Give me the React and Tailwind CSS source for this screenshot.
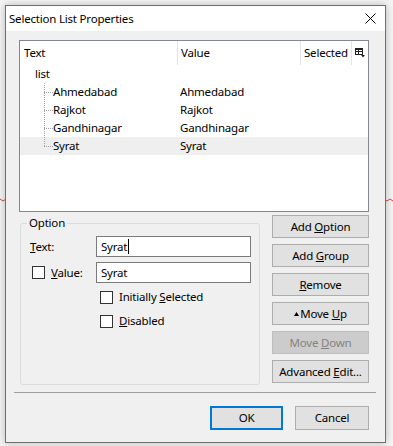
import React from "react";

const font = { fontFamily: '"Noto Sans", "Liberation Sans", sans-serif' };

function Btn({ children, disabled, className = "" }) {
  return (
    <div
      className={
        "flex h-[23px] w-[97px] items-center justify-center border text-[11.5px] " +
        (disabled
          ? "border-[#bfbfbf] bg-[#cccccc] text-[#838383] "
          : "border-[#adadad] bg-[#e1e1e1] text-black ") +
        className
      }
    >
      {children}
    </div>
  );
}

function Check() {
  return <div className="h-[13px] w-[13px] shrink-0 border border-[#333333] bg-white" />;
}

function TreeRow({ text, last, selected }) {
  return (
    <div className={"flex h-[18px] items-center " + (selected ? "bg-[#efefef]" : "")}>
      <div className="flex w-[158px] items-center pl-[24px]">
        <svg width="9" height="18" className="shrink-0">
          <line x1="0.5" y1="0" x2="0.5" y2={last ? 9 : 18} stroke="#a0a0a0" strokeDasharray="1 1" />
          <line x1="0" y1="9.5" x2="9" y2="9.5" stroke="#a0a0a0" strokeDasharray="1 1" />
        </svg>
        <span className="text-[11.5px] text-black">{text}</span>
      </div>
      <span className="pl-[2px] text-[11.5px] text-black">{text}</span>
    </div>
  );
}

export default function App() {
  return (
    <div
      className="relative h-[446px] w-[393px] overflow-hidden bg-[#f5f5f5] tracking-[-0.2px]"
      style={font}
    >
      <svg className="absolute left-0 top-[198px]" width="393" height="4">
        <polyline
          points={Array.from({ length: 132 }, (_, i) => `${i * 3},${i % 2 ? 3 : 1}`).join(" ")}
          fill="none"
          stroke="#e04040"
          strokeWidth="1"
        />
      </svg>
      <div className="relative ml-[5px] mt-[5px] flex h-[438px] w-[381px] flex-col border border-[#6f6f6f] bg-[#f0f0f0] shadow-[0_0_8px_rgba(0,0,0,0.25)]">
        {/* Title bar */}
        <div className="flex h-[25px] items-center justify-between bg-white pl-[3px] pr-[9px]">
          <span className="text-[11.5px] text-black">Selection List Properties</span>
          <svg width="11" height="11" viewBox="0 0 11 11">
            <path d="M0.5 0.5 L10.5 10.5 M10.5 0.5 L0.5 10.5" stroke="#000" strokeWidth="1" />
          </svg>
        </div>

        {/* List */}
        <div className="ml-[13px] mt-[9px] h-[172px] w-[350px] border border-[#828790] bg-white">
          <div className="flex h-[24px] text-[11.5px] text-black">
            <div className="flex w-[158px] items-center border-r border-[#e5e5e5] pl-[4px]">Text</div>
            <div className="flex w-[123px] items-center border-r border-[#e5e5e5] pl-[3px]">Value</div>
            <div className="flex w-[51px] items-center overflow-hidden whitespace-nowrap border-r border-[#e5e5e5] pl-[3px]">
              Selected
            </div>
            <div className="flex flex-1 items-center pl-[3px]">
              <svg width="11" height="10" viewBox="0 0 11 10">
                <rect x="0.5" y="0.5" width="7" height="6" fill="none" stroke="#222" />
                <line x1="0" y1="1.5" x2="8" y2="1.5" stroke="#222" />
                <line x1="0" y1="3.5" x2="8" y2="3.5" stroke="#222" />
                <line x1="3.5" y1="0" x2="3.5" y2="7" stroke="#222" />
                <path d="M6 7 L10 7 L8 9.5 Z" fill="#222" />
              </svg>
            </div>
          </div>
          <div className="flex h-[18px] items-center pl-[15px] text-[11.5px] text-black">list</div>
          <TreeRow text="Ahmedabad" />
          <TreeRow text="Rajkot" />
          <TreeRow text="Gandhinagar" />
          <TreeRow text="Syrat" last selected />
        </div>

        {/* Lower area */}
        <div className="ml-[14px] mt-[3px] flex items-start gap-[12px]">
          <div className="relative mt-[8px] h-[162px] w-[240px] rounded-[3px] border border-[#dcdcdc]">
            <span className="absolute -top-[9px] left-[6px] bg-[#f0f0f0] px-[2px] text-[11.5px] leading-[16px] text-black">
              Option
            </span>
            <div className="mt-[12px] flex items-center pl-[9px]">
              <span className="w-[66px] text-[11.5px] text-black">
                <u>T</u>ext:
              </span>
              <div className="flex h-[21px] w-[155px] items-center border border-[#7a7a7a] bg-white pl-[4px] text-[11.5px] text-black">
                Syrat
                <span className="ml-[1px] h-[15px] w-[1px] bg-black" />
              </div>
            </div>
            <div className="mt-[5px] flex items-center pl-[11px]">
              <Check />
              <span className="ml-[6px] w-[45px] text-[11.5px] text-black">
                <u>V</u>alue:
              </span>
              <div className="flex h-[21px] w-[155px] items-center border border-[#7a7a7a] bg-white pl-[4px] text-[11.5px] text-black">
                Syrat
              </div>
            </div>
            <div className="mt-[2px] flex h-[24px] items-center pl-[79px]">
              <Check />
              <span className="ml-[6px] text-[11.5px] text-black">
                Initially <u>S</u>elected
              </span>
            </div>
            <div className="flex h-[24px] items-center pl-[79px]">
              <Check />
              <span className="ml-[6px] text-[11.5px] text-black">
                <u>D</u>isabled
              </span>
            </div>
          </div>

          <div className="flex flex-col gap-[6px]">
            <Btn>
              <span>
                Add <u>O</u>ption
              </span>
            </Btn>
            <Btn>
              <span>
                Add <u>G</u>roup
              </span>
            </Btn>
            <Btn>
              <span>
                <u>R</u>emove
              </span>
            </Btn>
            <Btn>
              <svg width="5" height="4" viewBox="0 0 5 4" className="mr-[1px]">
                <path d="M2.5 0 L5 4 L0 4 Z" fill="#000" />
              </svg>
              <span>
                Move <u>U</u>p
              </span>
            </Btn>
            <Btn disabled>
              <span>
                Move <u>D</u>own
              </span>
            </Btn>
            <Btn>
              <span>
                Advanced <u>E</u>dit...
              </span>
            </Btn>
          </div>
        </div>

        {/* Separator */}
        <div className="ml-[8px] mt-[7px] h-[1px] w-[362px] bg-[#a0a0a0]" />

        {/* OK / Cancel */}
        <div className="mt-[13px] flex justify-end gap-[12px] pr-[16px]">
          <div className="flex h-[24px] w-[73px] items-center justify-center border-2 border-[#0078d7] bg-[#e1e1e1] text-[11.5px] text-black">
            OK
          </div>
          <div className="flex h-[24px] w-[74px] items-center justify-center border border-[#adadad] bg-[#e1e1e1] text-[11.5px] text-black">
            Cancel
          </div>
        </div>
      </div>
    </div>
  );
}
